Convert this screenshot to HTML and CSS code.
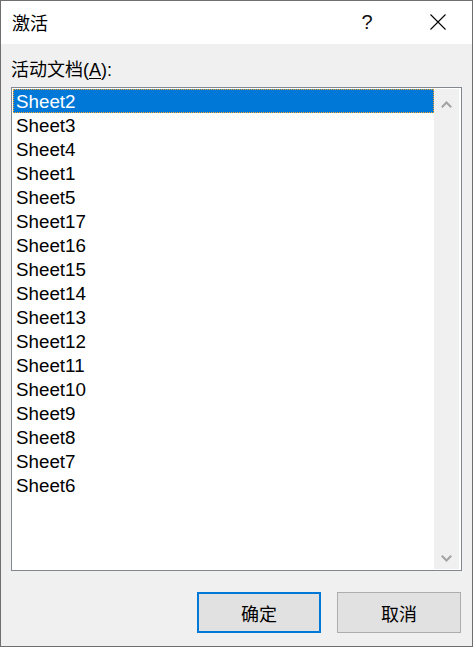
FILE: index.html
```html
<!DOCTYPE html>
<html lang="zh-CN">
<head>
<meta charset="utf-8">
<title>激活</title>
<link rel="stylesheet" href="styles.css">
</head>
<body>
<div class="window">
  <div class="titlebar">
    <span class="title">激活</span>
    <span class="help">?</span>
    <span class="close">
      <svg width="16" height="16" viewBox="0 0 16 16"><path d="M0.5 0.5 L15.5 15.5 M15.5 0.5 L0.5 15.5" stroke="#000" stroke-width="1.1" fill="none"/></svg>
    </span>
  </div>
  <div class="content">
    <div class="label">活动文档(<u>A</u>):</div>
    <div class="listbox">
      <ul class="items">
        <li class="selected"><span>Sheet2</span></li>
        <li>Sheet3</li>
        <li>Sheet4</li>
        <li>Sheet1</li>
        <li>Sheet5</li>
        <li>Sheet17</li>
        <li>Sheet16</li>
        <li>Sheet15</li>
        <li>Sheet14</li>
        <li>Sheet13</li>
        <li>Sheet12</li>
        <li>Sheet11</li>
        <li>Sheet10</li>
        <li>Sheet9</li>
        <li>Sheet8</li>
        <li>Sheet7</li>
        <li>Sheet6</li>
      </ul>
      <div class="scrollbar">
        <svg width="11" height="7" viewBox="0 0 11 7"><path d="M0.8 6.2 L5.5 1.5 L10.2 6.2" stroke="#a3a3a3" stroke-width="2" fill="none"/></svg>
        <svg width="11" height="7" viewBox="0 0 11 7"><path d="M0.8 0.8 L5.5 5.5 L10.2 0.8" stroke="#a3a3a3" stroke-width="2" fill="none"/></svg>
      </div>
    </div>
    <div class="buttons">
      <button class="btn default">确定</button>
      <button class="btn">取消</button>
    </div>
  </div>
</div>
</body>
</html>
```
FILE: styles.css
```css
html, body {
  margin: 0;
  padding: 0;
  background: #f0f0f0;
}
body {
  font-family: "Liberation Sans", "Noto Sans CJK SC", sans-serif;
  color: #000;
}
.window {
  width: 473px;
  height: 647px;
  box-sizing: border-box;
  border: 1px solid #6f6f6f;
  background: #f0f0f0;
  display: flex;
  flex-direction: column;
}
.titlebar {
  height: 43px;
  background: #fff;
  display: flex;
  align-items: center;
  padding-left: 11px;
  flex: none;
}
.title {
  font-size: 18px;
  flex: 1;
  padding-bottom: 1px;
}
.help {
  font-family: "Liberation Sans", sans-serif;
  font-size: 20px;
  width: 16px;
  margin-right: 55px;
  text-align: center;
  color: #111;
}
.close {
  width: 16px;
  height: 16px;
  margin-right: 26px;
  display: flex;
  margin-bottom: 1px;
}
.content {
  padding: 14px 10px 0 10px;
  display: flex;
  flex-direction: column;
  flex: 1;
}
.label {
  font-size: 18px;
  line-height: 24px;
  height: 24px;
  margin-bottom: 5px;
}
.label u {
  text-underline-offset: 2px;
}
.listbox {
  height: 484px;
  box-sizing: border-box;
  border: 1px solid #828790;
  background: #fff;
  padding: 1px;
  display: flex;
}
.items {
  list-style: none;
  margin: 0;
  padding: 0;
  flex: 1;
  font-size: 18.8px;
}
.items li {
  height: 24px;
  line-height: 25px;
  padding-left: 3px;
  box-sizing: border-box;
}
.items li.selected {
  background: #0078d7;
  color: #fff;
  outline: 1px dotted #f5a623;
  outline-offset: -1px;
}
.scrollbar {
  width: 25px;
  background: #f0f0f0;
  display: flex;
  flex-direction: column;
  justify-content: space-between;
  align-items: center;
  padding: 12px 0 7px;
  box-sizing: border-box;
  margin-right: 1px;
}
.buttons {
  display: flex;
  justify-content: flex-end;
  gap: 16px;
  margin-top: 21px;
  padding-right: 1px;
}
.btn {
  width: 124px;
  height: 41px;
  box-sizing: border-box;
  background: #e1e1e1;
  border: 1px solid #adadad;
  font-family: "Liberation Sans", "Noto Sans CJK SC", sans-serif;
  font-size: 18px;
  color: #000;
  padding: 0;
}
.btn.default {
  border: 2px solid #0078d7;
}
```
